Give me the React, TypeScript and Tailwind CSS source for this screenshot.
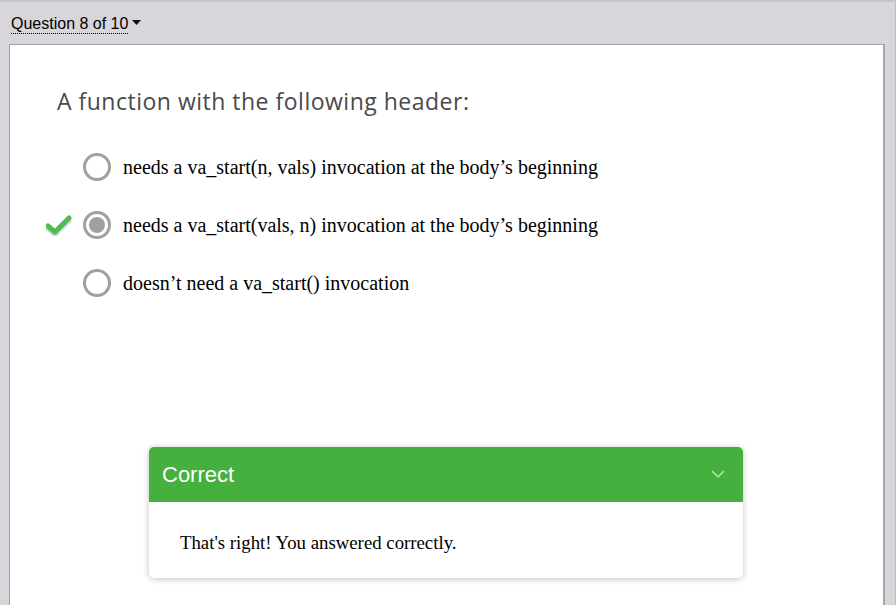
import React from 'react';

const options = [
  { text: 'needs a va_start(n, vals) invocation at the body\u2019s beginning', selected: false },
  { text: 'needs a va_start(vals, n) invocation at the body\u2019s beginning', selected: true },
  { text: 'doesn\u2019t need a va_start() invocation', selected: false },
];

const Check = () => (
  <svg width="26" height="22" viewBox="0 0 26 22">
    <path d="M2 12 L9 18 L23 4" fill="none" stroke="#d4d4d4" strokeWidth="5" strokeLinecap="round" strokeLinejoin="round" transform="translate(0 2.5)" />
    <path d="M2 12 L9 18 L23 4" fill="none" stroke="#4cbf4a" strokeWidth="5" strokeLinecap="round" strokeLinejoin="round" />
  </svg>
);

export default function App() {
  return (
    <div className="w-[896px] h-[605px] overflow-hidden bg-[#d8d6db] border-t-2 border-[#c6c4c9] border-r border-r-[#bdbbc1] flex flex-col">
      {/* Question selector */}
      <div className="h-[42px] flex items-center pl-[11px] pt-[2px]">
        <button className="flex items-center gap-[4px] text-[16px] text-black [font-family:'Liberation_Sans',Arial,sans-serif]">
          <span className="border-b border-dotted border-black leading-[18px]">Question 8 of 10</span>
          <svg width="9" height="6" viewBox="0 0 9 6" className="mt-[-2px]">
            <path d="M0 0 H9 L4.5 5 Z" fill="#111" />
          </svg>
        </button>
      </div>

      {/* Question panel */}
      <div className="flex-1 ml-[9px] mr-[10px] bg-white border-l border-t border-[#a3a3a3] border-r-2 border-r-[#a9a9a9] flex flex-col">
        <h1 className="pl-[47px] pt-[40px] text-[23px] leading-[32px] text-[#4a4a4a] tracking-[0.5px] [font-family:'Open_Sans',sans-serif]">
          A function with the following header:
        </h1>

        <ul className="mt-[36px] flex flex-col gap-[30px] pl-[36px]">
          {options.map((o) => (
            <li key={o.text} className="flex items-center h-[28px]">
              <span className="w-[37px] flex justify-start">{o.selected && <Check />}</span>
              <span className="w-[28px] h-[28px] rounded-full border-[3px] border-[#a0a0a0] flex items-center justify-center shrink-0">
                {o.selected && <span className="w-[16px] h-[16px] rounded-full bg-[#a0a0a0]" />}
              </span>
              <span className="ml-[12px] text-[20px] text-black [font-family:'Liberation_Serif','Times_New_Roman',serif]">
                {o.text}
              </span>
            </li>
          ))}
        </ul>

        {/* Feedback */}
        <div className="mt-[150px] ml-[139px] w-[594px] rounded-[5px] bg-white shadow-[0_1px_6px_rgba(0,0,0,0.25)] overflow-hidden">
          <div className="h-[55px] bg-[#46b03f] flex items-center justify-between pl-[13px] pr-[18px]">
            <span className="text-white text-[22px] [font-family:'Liberation_Sans',Arial,sans-serif]">Correct</span>
            <svg width="14" height="9" viewBox="0 0 14 9">
              <path d="M1 1 L7 7 L13 1" fill="none" stroke="#b9e3b4" strokeWidth="1.5" />
            </svg>
          </div>
          <div className="h-[76px] pt-[27px] pl-[31px] text-[18.8px] leading-[28px] text-black [font-family:'Liberation_Serif','Times_New_Roman',serif]">
            That's right! You answered correctly.
          </div>
        </div>
      </div>
    </div>
  );
}
